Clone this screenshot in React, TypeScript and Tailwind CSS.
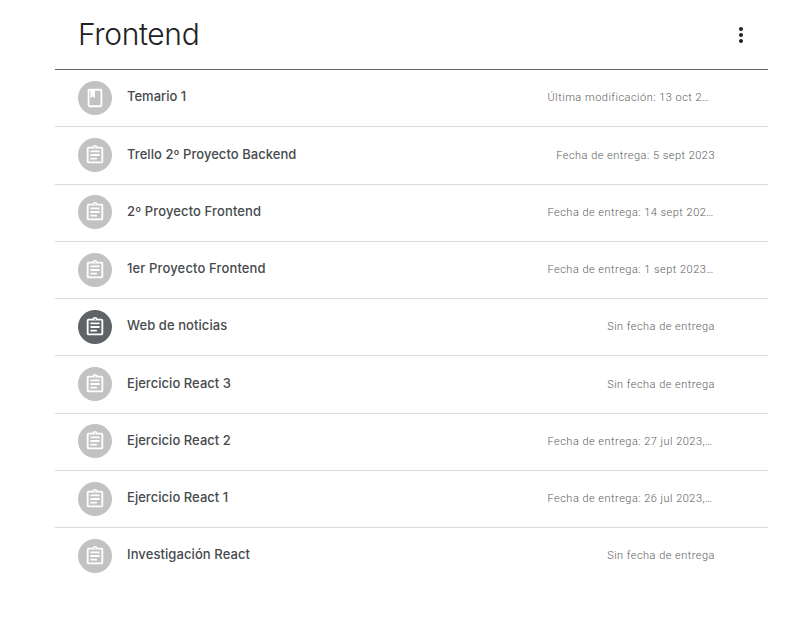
import { MdMoreVert, MdOutlineAssignment } from "react-icons/md";

type Item = {
  title: string;
  date: string;
  spacing: string;
  kind?: "material" | "task";
  active?: boolean;
};

const items: Item[] = [
  { title: "Temario 1", date: "Última modificación: 13 oct 2…", spacing: "tracking-[0px]", kind: "material" },
  { title: "Trello 2º Proyecto Backend", date: "Fecha de entrega: 5 sept 2023", spacing: "tracking-[0.05px]" },
  { title: "2º Proyecto Frontend", date: "Fecha de entrega: 14 sept 202…", spacing: "tracking-[0.12px]" },
  { title: "1er Proyecto Frontend", date: "Fecha de entrega: 1 sept 2023…", spacing: "tracking-[0.14px]" },
  { title: "Web de noticias", date: "Sin fecha de entrega", spacing: "tracking-[0.07px]", active: true },
  { title: "Ejercicio React 3", date: "Sin fecha de entrega", spacing: "tracking-[0.04px]" },
  { title: "Ejercicio React 2", date: "Fecha de entrega: 27 jul 2023,…", spacing: "tracking-[0.04px]" },
  { title: "Ejercicio React 1", date: "Fecha de entrega: 26 jul 2023,…", spacing: "tracking-[0.04px]" },
  { title: "Investigación React", date: "Sin fecha de entrega", spacing: "tracking-[0.09px]" },
];

// Book outline with a solid ribbon hanging from the top edge
function BookIcon() {
  return (
    <svg width="22" height="22" viewBox="0 0 24 24" fill="currentColor" aria-hidden="true">
      <path d="M18 2H6c-1.1 0-2 .9-2 2v16c0 1.1.9 2 2 2h12c1.1 0 2-.9 2-2V4c0-1.1-.9-2-2-2zm0 18H6V4h1v8l2.5-1.7L12 12V4h6v16z" />
    </svg>
  );
}

function Row({ item }: { item: Item }) {
  const truncated = item.date.endsWith("…");
  return (
    <li className="flex h-[57.25px] items-center border-b border-[#dadada] pl-[23px] last:border-transparent">
      <span
        className={`mb-[0.6px] flex size-[34px] shrink-0 items-center justify-center rounded-full text-white ${
          item.active ? "bg-[#5f6368]" : "bg-[#c2c2c2]"
        }`}
      >
        {item.kind === "material" ? <BookIcon /> : <MdOutlineAssignment size={22} />}
      </span>
      <span
        className={`ml-[15px] flex-1 pb-[3.5px] font-['Inter','Liberation_Sans',sans-serif] text-[13px] leading-5 font-medium whitespace-nowrap text-[#464a4d] ${item.spacing}`}
      >
        {item.title}
      </span>
      <span
        className={`mr-[53px] w-[167.5px] pt-[0.4px] font-['Roboto','Liberation_Sans',sans-serif] text-[11px] leading-4 font-light tracking-[0.48px] whitespace-nowrap text-[#5c5c5c] ${
          truncated ? "text-left" : "text-right"
        }`}
      >
        {item.date}
      </span>
    </li>
  );
}

export default function App() {
  return (
    <main className="h-[620px] w-[800px] overflow-hidden bg-white pl-[55px]">
      <section className="w-[713px]">
        <header className="flex h-[70px] items-center justify-between border-b border-[#5f6368] pr-[15px] pl-[23px]">
          <h2 className="pb-px font-['Inter','Liberation_Sans',sans-serif] text-[30px] leading-10 font-[350] tracking-[-0.35px] text-[#202124]">
            Frontend
          </h2>
          <button type="button" aria-label="Opciones" className="pt-px text-[#202124]">
            <MdMoreVert size={24} />
          </button>
        </header>
        <ul>
          {items.map((item) => (
            <Row key={item.title} item={item} />
          ))}
        </ul>
      </section>
    </main>
  );
}
